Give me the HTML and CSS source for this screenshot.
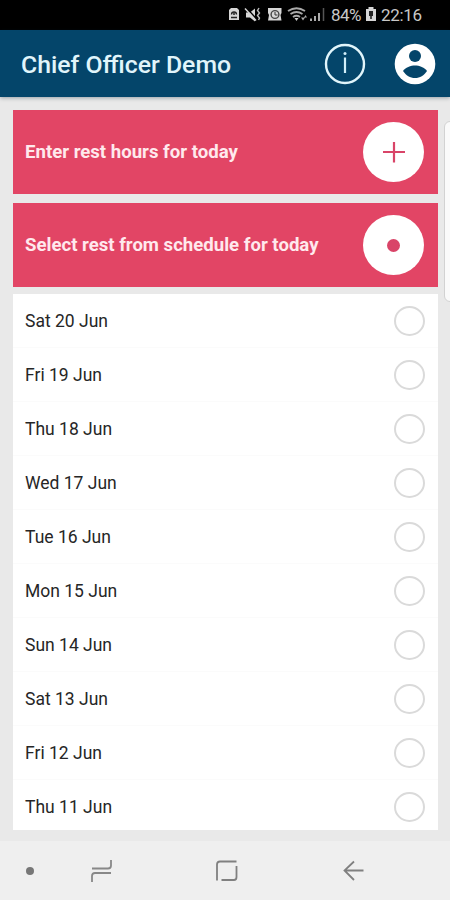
FILE: index.html
```html
<!DOCTYPE html>
<html lang="en">
<head>
    <meta charset="UTF-8">
    <meta name="viewport" content="width=device-width, initial-scale=1.0">
    <title>Chief Officer Demo</title>
    <link rel="stylesheet" href="styles.css">
</head>
<body>
    <div class="status-bar">
        <svg class="status-icons" width="100" height="18" viewBox="0 0 100 18">
            <!-- battery saver -->
            <path d="M1 4l2-2h6l2 2v10H1z" fill="#d6d6d6"/>
            <path d="M3.500 8.500a2.500 2.500 0 0 1 5 0M3 11.500h6" fill="none" stroke="#222" stroke-width="1.300"/>
            <circle cx="6" cy="8" r="1" fill="#222"/>
            <!-- muted -->
            <path d="M18 6.500h4l5-4v13l-5-4h-4z" fill="#d6d6d6"/>
            <path d="M18.500 2l10 11" stroke="#000" stroke-width="1.500"/>
            <path d="M17 2.500l11 12" stroke="#d6d6d6" stroke-width="1.500"/>
            <path d="M31 2l-1.500 2.500 2 2.500-2 2.500 2 2.500-1 2" fill="none" stroke="#bbb" stroke-width="1.400"/>
            <!-- alarm -->
            <path d="M40 2h13.500v5l-1 2 1 5.500H40l1-5.500-1-2z" fill="#d6d6d6"/>
            <circle cx="47" cy="8.500" r="3.900" fill="#d6d6d6" stroke="#444" stroke-width="1.400"/>
            <path d="M47 6v3h2.500" fill="none" stroke="#333"/>
            <!-- wifi -->
            <path d="M60 5q8.500-5.500 17 0M62.500 8q6-4 12 0M65 11q3.500-2.500 7 0" fill="none" stroke="#aaa" stroke-width="1.800"/>
            <path d="M66.500 12h4l-2 3z" fill="#ccc"/>
            <path d="M73 11.500l2 3 2-3zM76 11.500l1.500-2.500 1.500 2.500z" fill="#aaa"/>
            <!-- signal -->
            <path d="M82 12.500h2V15h-2zM86 10h2v5h-2zM90 7h2v8h-2z" fill="#aaa"/>
            <path d="M95.500 2v13" stroke="#555" stroke-width="1.500"/>
        </svg>
        <span class="status-text percent">84%</span>
        <svg class="battery" width="10" height="16" viewBox="0 0 10 16">
            <path d="M0 2h2.500V0h5v2H10v12H0z" fill="#d6d6d6"/>
            <path d="M3 4h4v5H5.800v3H4.200V9H3z" fill="#222"/>
        </svg>
        <span class="status-text clock">22:16</span>
    </div>

    <div class="header">
        <div class="title">Chief Officer Demo</div>
        <svg class="info" width="42" height="42" viewBox="0 0 42 42">
            <circle cx="21" cy="21" r="19" fill="none" stroke="#e1f5fb" stroke-width="2.400"/>
            <path d="M21 14.500v15.500" stroke="#d2effa" stroke-width="2.200"/>
            <circle cx="21" cy="10.500" r="1.500" fill="#d2effa"/>
        </svg>
        <svg class="account" width="42" height="42" viewBox="0 0 42 42">
            <circle cx="21" cy="21" r="20.300" fill="#fff"/>
            <circle cx="21" cy="13" r="6" fill="#04456a"/>
            <path d="M9 28C11 24.500 17 22.500 21 22.500s10 2 12 5.500C30 32.500 26 35 21 35s-9-2.500-12-7z" fill="#04456a"/>
        </svg>
    </div>

    <div class="content">
        <div class="action">
            <span>Enter rest hours for today</span>
            <div class="round">
                <svg width="24" height="24" viewBox="0 0 24 24">
                    <path d="M12 2v20.500M1 12h22" stroke="#d94468" stroke-width="2.200"/>
                </svg>
            </div>
        </div>
        <div class="action">
            <span>Select rest from schedule for today</span>
            <div class="round"><div class="dot"></div></div>
        </div>

        <div class="days">
            <div class="day"><span>Sat 20 Jun</span><div class="radio"></div></div>
            <div class="day"><span>Fri 19 Jun</span><div class="radio"></div></div>
            <div class="day"><span>Thu 18 Jun</span><div class="radio"></div></div>
            <div class="day"><span>Wed 17 Jun</span><div class="radio"></div></div>
            <div class="day"><span>Tue 16 Jun</span><div class="radio"></div></div>
            <div class="day"><span>Mon 15 Jun</span><div class="radio"></div></div>
            <div class="day"><span>Sun 14 Jun</span><div class="radio"></div></div>
            <div class="day"><span>Sat 13 Jun</span><div class="radio"></div></div>
            <div class="day"><span>Fri 12 Jun</span><div class="radio"></div></div>
            <div class="day"><span>Thu 11 Jun</span><div class="radio"></div></div>
        </div>
        <div class="edge-handle"></div>
    </div>

    <div class="nav-bar">
        <div class="nav-dot"></div>
        <svg class="recents" width="22" height="24" viewBox="0 0 22 24">
            <path d="M1 9.500h16q3 0 3-3V1M20 14H4q-3 0-3 3V23" fill="none" stroke="#888" stroke-width="1.800"/>
        </svg>
        <svg class="home" width="22" height="22" viewBox="0 0 22 22">
            <path d="M20.500 1.500H4q-3 0-3 3V20.500M5.500 20H18q2.500 0 2.500-3V6" fill="none" stroke="#808080" stroke-width="1.800"/>
        </svg>
        <svg class="back" width="22" height="22" viewBox="0 0 22 22">
            <path d="M11 1.500L1.500 10.500L11 20M1.500 10.500H20.500" fill="none" stroke="#808080" stroke-width="1.800"/>
        </svg>
    </div>
</body>
</html>
```

FILE: styles.css
```css
* {
    box-sizing: border-box;
}
body {
    margin: 0;
    width: 450px;
    height: 900px;
    overflow: hidden;
    display: flex;
    flex-direction: column;
    font-family: Roboto, sans-serif;
    background-color: #e9e9e9;
}
.status-bar {
    height: 30px;
    flex: none;
    display: flex;
    align-items: center;
    padding-left: 228px;
    background-color: #000;
    color: #c8c8c8;
}
.status-icons {
    flex: none;
}
.status-text {
    font-size: 17px;
    line-height: 30px;
    white-space: nowrap;
}
.percent {
    width: 31px;
    margin-left: 3px;
    letter-spacing: -0.6px;
}
.battery {
    margin: 0 5px 0 4px;
}
.clock {
    letter-spacing: -0.3px;
}
.header {
    height: 67px;
    flex: none;
    display: flex;
    align-items: center;
    padding: 0 14px 0 21px;
    background-color: #04456a;
    box-shadow: 0 1px 4px rgba(0, 30, 50, 0.35);
    color: #e1f5fb;
}
.title {
    flex: 1;
    padding-top: 2px;
    font-size: 24.8px;
    font-weight: 500;
    white-space: nowrap;
}
.info {
    margin-right: 28px;
}
.content {
    position: relative;
    height: 744px;
    flex: none;
    padding: 13px 12px 0 13px;
}
.action {
    height: 84px;
    margin-bottom: 9px;
    padding: 0 14px 0 12px;
    display: flex;
    justify-content: space-between;
    align-items: center;
    background-color: #e24565;
    color: #ffe9ed;
    font-size: 18.6px;
    font-weight: 700;
}
.action + .action {
    margin-bottom: 7px;
}
.round {
    width: 61px;
    height: 60px;
    display: flex;
    justify-content: center;
    align-items: center;
    border-radius: 50%;
    background-color: #fff;
}
.dot {
    width: 13px;
    height: 13px;
    border-radius: 50%;
    background-color: #d94468;
}
.days {
    height: 536px;
    overflow: hidden;
    background-color: #fff;
}
.day {
    height: 54px;
    padding: 1px 13px 0 12px;
    display: flex;
    justify-content: space-between;
    align-items: center;
    border-bottom: 1px solid #fbfbfb;
    color: #262626;
    font-size: 17.5px;
}
.radio {
    width: 31px;
    height: 30px;
    border: 2px solid #dadada;
    border-radius: 50%;
}
/* edge panel handle over the right side of the screen */
.edge-handle {
    position: absolute;
    top: 24px;
    right: -6px;
    width: 12px;
    height: 181px;
    border: 1px solid #d2d2d2;
    border-radius: 6px;
    background-color: #fafafa;
}
.nav-bar {
    flex: 1;
    display: flex;
    align-items: center;
    padding-left: 26px;
    background-color: #efefef;
}
.nav-dot {
    width: 8px;
    height: 8px;
    border-radius: 50%;
    background-color: #777;
}
.recents {
    margin-left: 57px;
}
.home {
    margin-left: 103px;
}
.back {
    margin-left: 105px;
}
```
